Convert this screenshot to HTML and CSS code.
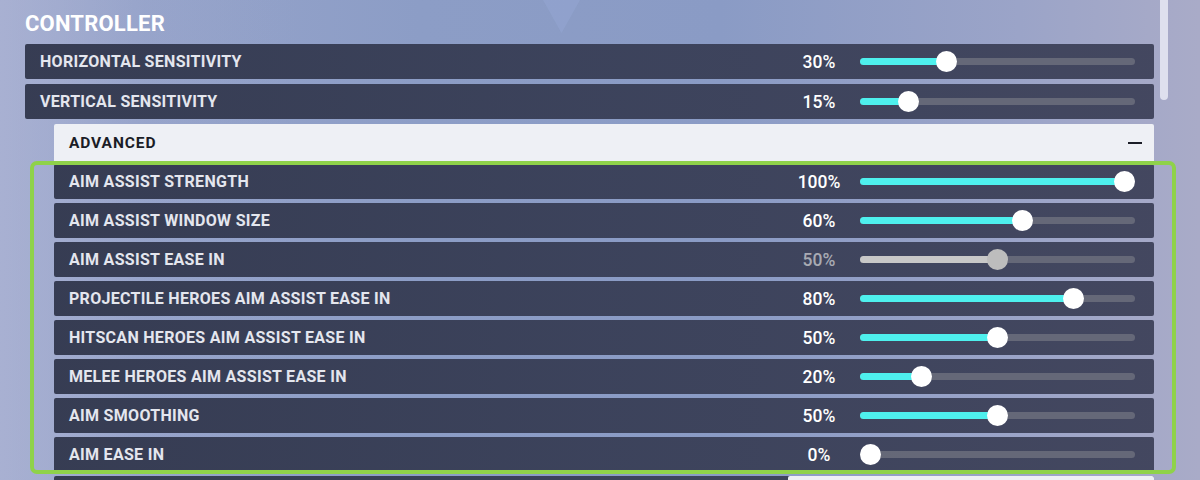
FILE: index.html
```html
<!DOCTYPE html>
<html>
<head>
<meta charset="utf-8">
<link rel="stylesheet" href="styles.css">
</head>
<body>
<div class="page">
  <div class="content">
    <h1 class="title">CONTROLLER</h1>
    <div class="rows top-rows">
      <div class="row">
        <span class="label">HORIZONTAL SENSITIVITY</span>
        <span class="pct">30%</span>
        <div class="slider"><div class="fill" style="width:86.2px"></div><div class="knob" style="left:76.2px"></div></div>
      </div>
      <div class="row">
        <span class="label">VERTICAL SENSITIVITY</span>
        <span class="pct">15%</span>
        <div class="slider"><div class="fill" style="width:48.1px"></div><div class="knob" style="left:38.1px"></div></div>
      </div>
    </div>
    <div class="advanced">
      <div class="adv-head">
        <span class="adv-title">ADVANCED</span>
        <span class="minus"></span>
      </div>
      <div class="adv-body">
        <div class="highlight"></div>
        <div class="row">
          <span class="label">AIM ASSIST STRENGTH</span>
          <span class="pct">100%</span>
          <div class="slider"><div class="fill" style="width:264px"></div><div class="knob" style="left:254px"></div></div>
        </div>
        <div class="row">
          <span class="label">AIM ASSIST WINDOW SIZE</span>
          <span class="pct">60%</span>
          <div class="slider"><div class="fill" style="width:162.4px"></div><div class="knob" style="left:152.4px"></div></div>
        </div>
        <div class="row disabled">
          <span class="label">AIM ASSIST EASE IN</span>
          <span class="pct">50%</span>
          <div class="slider"><div class="fill" style="width:137px"></div><div class="knob" style="left:127px"></div></div>
        </div>
        <div class="row">
          <span class="label">PROJECTILE HEROES AIM ASSIST EASE IN</span>
          <span class="pct">80%</span>
          <div class="slider"><div class="fill" style="width:213.2px"></div><div class="knob" style="left:203.2px"></div></div>
        </div>
        <div class="row">
          <span class="label">HITSCAN HEROES AIM ASSIST EASE IN</span>
          <span class="pct">50%</span>
          <div class="slider"><div class="fill" style="width:137px"></div><div class="knob" style="left:127px"></div></div>
        </div>
        <div class="row">
          <span class="label">MELEE HEROES AIM ASSIST EASE IN</span>
          <span class="pct">20%</span>
          <div class="slider"><div class="fill" style="width:60.8px"></div><div class="knob" style="left:50.8px"></div></div>
        </div>
        <div class="row">
          <span class="label">AIM SMOOTHING</span>
          <span class="pct">50%</span>
          <div class="slider"><div class="fill" style="width:137px"></div><div class="knob" style="left:127px"></div></div>
        </div>
        <div class="row">
          <span class="label">AIM EASE IN</span>
          <span class="pct">0%</span>
          <div class="slider"><div class="fill" style="width:0px"></div><div class="knob" style="left:0px"></div></div>
        </div>
        <div class="row partial">
          <span class="label"></span>
          <div class="dropdown"></div>
        </div>
      </div>
    </div>
  </div>
  <div class="scrollbar"></div>
</div>
</body>
</html>
```

FILE: styles.css
```css
* { box-sizing: border-box; }
html, body {
  margin: 0;
  padding: 0;
  width: 1200px;
  height: 480px;
  overflow: hidden;
}
body {
  font-family: Roboto, "Liberation Sans", sans-serif;
  background:
    linear-gradient(90deg, rgba(180,185,215,0.55) 0%, rgba(160,170,205,0.2) 12%, rgba(0,0,0,0) 25%),
    linear-gradient(90deg, #9aa6cc 0%, #8c9dc6 35%, #8a9bc5 60%, #9ba4c8 85%, #a9abc8 100%);
  position: relative;
}
body::before {
  content: "";
  position: absolute;
  left: 543px;
  top: 0;
  width: 37px;
  height: 33px;
  background: rgba(150,168,212,0.45);
  clip-path: polygon(0 0, 100% 0, 50% 100%);
}
.page {
  position: relative;
  z-index: 1;
  display: flex;
  align-items: flex-start;
  gap: 6px;
  padding-left: 25px;
}
.content {
  width: 1129px;
}
.title {
  margin: 0;
  padding-top: 11px;
  height: 44px;
  font-size: 22px;
  line-height: 26px;
  font-weight: 700;
  color: #ffffff;
  letter-spacing: 0.2px;
}
.rows {
  display: flex;
  flex-direction: column;
  gap: 5px;
}
.row {
  height: 35px;
  display: flex;
  align-items: center;
  padding-left: 15px;
  padding-right: 19px;
  background: linear-gradient(90deg, rgba(50,56,78,0.96) 0%, rgba(56,62,86,0.95) 50%, rgba(62,66,90,0.95) 100%);
  border-radius: 2px;
}
.label {
  flex: 1;
  font-size: 16px;
  font-weight: 700;
  color: #e4e6ee;
  letter-spacing: 0.3px;
}
.pct {
  width: 60px;
  text-align: center;
  font-size: 17.5px;
  font-weight: 500;
  color: #ffffff;
  margin-right: 11px;
}
.slider {
  position: relative;
  width: 275px;
  height: 7px;
  border-radius: 4px;
  background: rgba(110,112,126,0.8);
}
.fill {
  height: 7px;
  border-radius: 4px;
  background: #4ef0ee;
}
.knob {
  position: absolute;
  top: -7px;
  width: 21px;
  height: 21px;
  border-radius: 50%;
  background: #ffffff;
}
.disabled .pct { color: #a8aab3; }
.disabled .fill { background: #c8c8c8; }
.disabled .knob { background: #bdbdbd; }
.advanced {
  margin-top: 5px;
  margin-left: 29px;
}
.adv-head {
  height: 37px;
  display: flex;
  align-items: center;
  justify-content: space-between;
  padding-left: 15px;
  padding-right: 12px;
  background: #eef0f5;
  border-radius: 2px 2px 0 0;
}
.adv-title {
  font-size: 15.5px;
  font-weight: 700;
  color: #1b1d27;
  letter-spacing: 0.9px;
}
.minus {
  width: 14px;
  height: 2px;
  background: #1b1d27;
}
.adv-body {
  position: relative;
  margin-top: 3px;
  display: flex;
  flex-direction: column;
  gap: 4px;
}
.highlight {
  position: absolute;
  left: -24px;
  top: -3px;
  width: 1146px;
  height: 313px;
  border: 4px solid #8fd24a;
  border-radius: 7px;
  z-index: 2;
  pointer-events: none;
}
.partial {
  padding-right: 0;
  height: 20px;
  align-items: stretch;
}
.dropdown {
  width: 366px;
  margin-top: 0;
  background: #eef0f5;
  border-radius: 2px;
}
.scrollbar {
  width: 8px;
  height: 100px;
  border-radius: 0 0 4px 4px;
  background: rgba(232,234,244,0.85);
  flex: none;
}
```
